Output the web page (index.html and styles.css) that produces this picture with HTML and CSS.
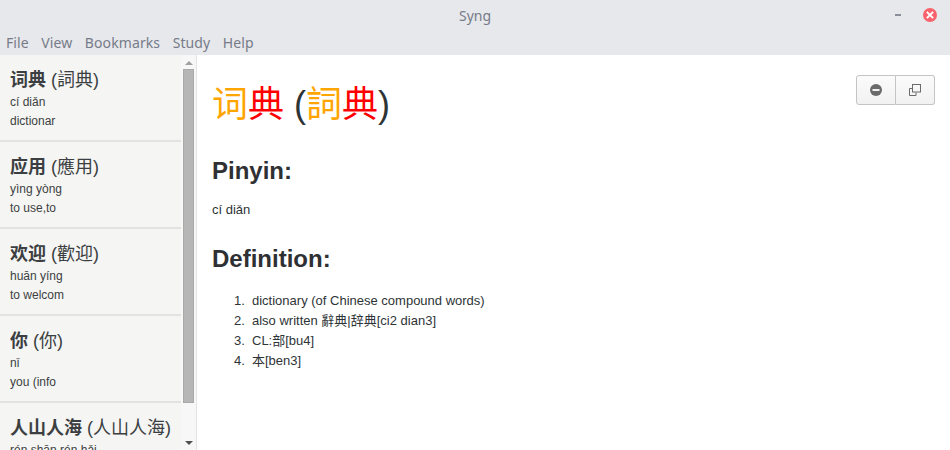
FILE: index.html
```html
<!DOCTYPE html>
<html lang="zh">
<head>
<meta charset="utf-8">
<title>Syng</title>
<link rel="stylesheet" href="styles.css">
</head>
<body>
<div class="app">
  <header class="header">
    <div class="titlebar">
      <span class="title">Syng</span>
      <div class="controls">
        <span class="minimize"></span>
        <svg class="close" width="14" height="14" viewBox="0 0 14 14"><circle cx="7" cy="7" r="7" fill="#f9626c"/><path d="M4.6 4.6l4.8 4.8M9.4 4.6l-4.8 4.8" stroke="#fff" stroke-width="2" stroke-linecap="square"/></svg>
      </div>
    </div>
    <nav class="menu">
      <span>File</span><span>View</span><span>Bookmarks</span><span>Study</span><span>Help</span>
    </nav>
  </header>
  <div class="main">
    <aside class="sidebar">
      <div class="list">
        <div class="item">
          <div class="word"><b>词典</b> (詞典)</div>
          <div class="sub">cí diǎn</div>
          <div class="sub">dictionar</div>
        </div>
        <div class="item">
          <div class="word"><b>应用</b> (應用)</div>
          <div class="sub">yìng yòng</div>
          <div class="sub">to use,to</div>
        </div>
        <div class="item">
          <div class="word"><b>欢迎</b> (歡迎)</div>
          <div class="sub">huān yíng</div>
          <div class="sub">to welcom</div>
        </div>
        <div class="item">
          <div class="word"><b>你</b> (你)</div>
          <div class="sub">nǐ</div>
          <div class="sub">you (info</div>
        </div>
        <div class="item">
          <div class="word"><b>人山人海</b> (人山人海)</div>
          <div class="sub">rén shān rén hǎi</div>
        </div>
      </div>
      <div class="scrollbar">
        <span class="arrow up"></span>
        <span class="thumb"></span>
        <span class="arrow down"></span>
      </div>
    </aside>
    <main class="content">
      <div class="toolbar">
        <button class="tool" type="button" aria-label="Remove">
          <svg width="12" height="12" viewBox="0 0 12 12"><circle cx="6" cy="6" r="6" fill="#6b6b6b"/><rect x="2.5" y="5" width="7" height="2" fill="#f3f3f3"/></svg>
        </button>
        <button class="tool" type="button" aria-label="Copy">
          <svg width="12" height="12" viewBox="0 0 12 12" fill="none" stroke="#6b6b6b" stroke-width="1"><rect x="3.5" y="0.5" width="8" height="7.5"/><path d="M3 4.5H0.5v7H7V8.5"/></svg>
        </button>
      </div>
      <h1 class="headword"><span class="t3">词</span><span class="t4">典</span> (<span class="t3">詞</span><span class="t4">典</span>)</h1>
      <h2 class="section">Pinyin:</h2>
      <p class="pinyin">cí diǎn</p>
      <h2 class="section">Definition:</h2>
      <ol class="defs">
        <li>dictionary (of Chinese compound words)</li>
        <li>also written 辭典|辞典[ci2 dian3]</li>
        <li>CL:部[bu4]</li>
        <li>本[ben3]</li>
      </ol>
    </main>
  </div>
</div>
</body>
</html>
```

FILE: styles.css
```css
* { box-sizing: border-box; }
html, body { margin: 0; height: 100%; overflow: hidden; }
body {
  font-family: "Liberation Sans", "Noto Sans CJK SC", sans-serif;
  color: #2e3436;
  background: #fff;
}
.app { display: flex; flex-direction: column; height: 450px; }
.header { height: 55px; flex: none; background: #e7e8eb; }
.titlebar {
  height: 31px;
  display: flex;
  align-items: center;
  justify-content: center;
  position: relative;
}
.title { font: 14px "Noto Sans", sans-serif; color: #767b89; }
.controls { position: absolute; right: 13px; top: 8px; display: flex; align-items: center; gap: 22px; }
.minimize { width: 6px; height: 2px; background: #8b8f9c; }
.close { display: block; }
.menu {
  height: 24px;
  display: flex;
  gap: 12.5px;
  padding-left: 6px;
  font: 14px/24px "Noto Sans", sans-serif;
  letter-spacing: 0.1px;
  color: #767b89;
}
.main { flex: 1; display: flex; min-height: 0; }
.sidebar {
  width: 197px;
  flex: none;
  display: flex;
  background: #f7f7f7;
  border-right: 1px solid #e4e4e4;
  overflow: hidden;
}
.list { width: 181px; flex: none; background: #f5f5f4; }
.item {
  height: 87px;
  padding: 12px 0 0 10px;
  border-bottom: 2px solid #e2e2e2;
  white-space: nowrap;
}
.word { font-size: 18px; line-height: 26px; color: #3c3f41; }
.word b { font-weight: 700; }
.sub { font-size: 12px; line-height: 19px; color: #3c3f41; }
.scrollbar { width: 15px; flex: none; position: relative; }
.thumb {
  position: absolute;
  left: 2px;
  top: 14px;
  width: 11px;
  height: 334px;
  background: #b6b6b6;
  border: 1px solid #a9a9a9;
}
.arrow { position: absolute; left: 3.5px; width: 0; height: 0; border-left: 4px solid transparent; border-right: 4px solid transparent; }
.arrow.up { top: 6px; border-bottom: 4px solid #a0a0a0; }
.arrow.down { top: 386px; border-top: 4px solid #505050; }
.content { flex: 1; position: relative; padding: 0 15px; min-width: 0; }
.toolbar { position: absolute; top: 20px; right: 15px; display: flex; }
.tool {
  width: 40px;
  height: 30px;
  padding: 0;
  display: flex;
  align-items: center;
  justify-content: center;
  background: linear-gradient(#fbfbfb, #f1f1f1);
  border: 1px solid #c4c4c4;
  border-radius: 3px 0 0 3px;
}
.tool + .tool { width: 39px; border-left: 0; border-radius: 0 3px 3px 0; }
.headword {
  margin: 25px 0 0;
  font-size: 36px;
  line-height: 50px;
  font-weight: 400;
  white-space: nowrap;
}
.t3 { color: #ffa500; }
.t4 { color: #f00; }
.section { margin: 0; font-size: 24px; line-height: 34px; font-weight: 700; color: #2e3033; }
.headword + .section { margin-top: 24px; }
.pinyin { margin: 12px 0 0; font-size: 13px; line-height: 20px; }
.pinyin + .section { margin-top: 22px; }
.defs { margin: 15px 0 0; padding-left: 40px; font-size: 13px; line-height: 20px; }
.defs li::marker { content: counter(list-item) ".\00a0\00a0"; }
```
